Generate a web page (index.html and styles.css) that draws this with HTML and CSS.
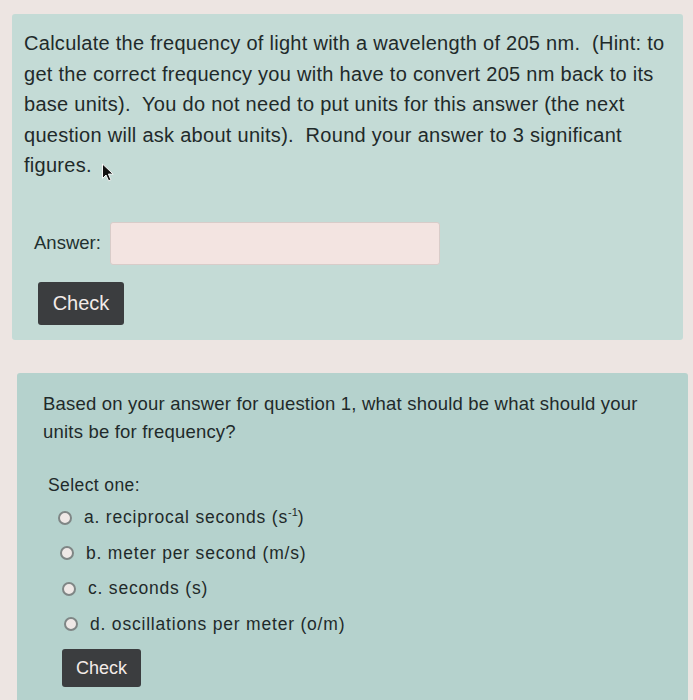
FILE: index.html
```html
<!DOCTYPE html>
<html>
<head>
<meta charset="utf-8">
<link rel="stylesheet" href="styles.css">
</head>
<body>
<div class="page">
  <div class="card card1">
    <p class="qtext">Calculate the frequency of light with a wavelength of 205 nm.&nbsp; (Hint: to<br>get the correct frequency you with have to convert 205 nm back to its<br>base units).&nbsp; You do not need to put units for this answer (the next<br>question will ask about units).&nbsp; Round your answer to 3 significant<br>figures.<span class="cursor"><svg width="14" height="20" viewBox="0 0 14 20"><path d="M1.5 1 L1.5 15.5 L5 12 L7.6 17.8 L9.9 16.8 L7.4 11.1 L12.2 11.1 Z" fill="#111" stroke="#f4f4f4" stroke-width="1" stroke-linejoin="round"/></svg></span></p>
    <div class="answer-row">
      <label class="answer-label">Answer:</label>
      <div class="answer-input"></div>
    </div>
    <button class="check check1">Check</button>
  </div>
  <div class="card card2">
    <p class="qtext2">Based on your answer for question 1, what should be what should your<br>units be for frequency?</p>
    <div class="select">Select one:</div>
    <ul class="options">
      <li><span class="radio"></span><span class="opt">a. reciprocal seconds (s<sup>-1</sup>)</span></li>
      <li><span class="radio"></span><span class="opt">b. meter per second (m/s)</span></li>
      <li><span class="radio"></span><span class="opt">c. seconds (s)</span></li>
      <li><span class="radio"></span><span class="opt">d. oscillations per meter (o/m)</span></li>
    </ul>
    <button class="check check2">Check</button>
  </div>
</div>
</body>
</html>
```
FILE: styles.css
```css
html, body {
  margin: 0;
  padding: 0;
  background: #ede5e2;
  height: 700px;
  overflow: hidden;
}
.page {
  display: flex;
  flex-direction: column;
  padding-top: 14px;
  font-family: "Liberation Sans", Arial, sans-serif;
  color: #1f2a2a;
}
.card {
  box-sizing: border-box;
  border-radius: 3px;
}
.card1 {
  margin-left: 12px;
  width: 671px;
  height: 326px;
  background: #c4dbd6;
  padding: 14px 12px 0 12px;
}
.qtext {
  margin: 0;
  font-size: 20px;
  letter-spacing: 0.28px;
  line-height: 30.5px;
  white-space: nowrap;
}
.cursor {
  display: inline-block;
  margin-left: 9px;
  vertical-align: -11px;
}
.answer-row {
  display: flex;
  align-items: center;
  margin-top: 30px;
  padding-left: 10px;
}
.answer-label {
  font-size: 18.5px;
  color: #22302f;
  margin-right: 9px;
}
.answer-input {
  width: 330px;
  height: 43px;
  background: #f3e4e1;
  border: 1px solid #d8ccc9;
  border-radius: 3px;
  box-sizing: border-box;
}
.check {
  display: block;
  border: none;
  border-radius: 3px;
  background: #3b3d3f;
  color: #f3ebe8;
  font-family: "Liberation Sans", Arial, sans-serif;
  padding: 0;
}
.check1 {
  margin: 17px 0 0 14px;
  width: 86px;
  height: 43px;
  font-size: 20px;
}
.card2 {
  margin-top: 33px;
  margin-left: 17px;
  width: 671px;
  height: 340px;
  background: #b5d2cd;
  padding: 17px 20px 0 26px;
}
.qtext2 {
  margin: 0;
  font-size: 18.5px;
  letter-spacing: 0.2px;
  line-height: 28px;
  white-space: nowrap;
}
.select {
  margin-top: 26px;
  margin-left: 5px;
  font-size: 17.5px;
  letter-spacing: 0.4px;
  line-height: 26px;
}
.options {
  list-style: none;
  margin: 2px 0 0 0;
  padding: 0 0 0 15px;
}
.options li {
  display: flex;
  align-items: center;
  height: 35.5px;
  font-size: 17.5px;
}
.opt {
  letter-spacing: 0.8px;
}
.options li:nth-child(2) { padding-left: 2px; }
.options li:nth-child(3) { padding-left: 4px; }
.options li:nth-child(4) { padding-left: 6px; }
.options sup {
  font-size: 11px;
  line-height: 1;
  vertical-align: super;
  letter-spacing: 0;
}
.radio {
  display: inline-block;
  width: 10px;
  height: 10px;
  border-radius: 50%;
  background: #efe8e6;
  border: 2px solid #7f8685;
  margin-right: 12px;
  flex: none;
}
.check2 {
  margin: 7px 0 0 19px;
  width: 79px;
  height: 38px;
  font-size: 18px;
}
```
